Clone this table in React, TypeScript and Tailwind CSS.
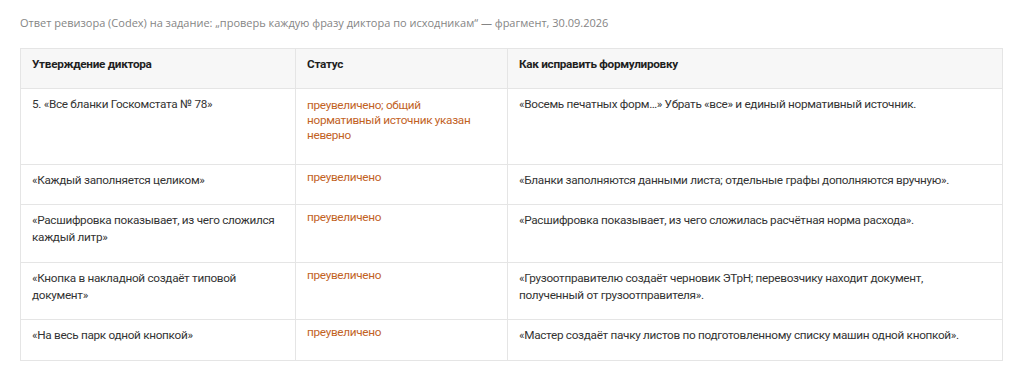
import React from 'react';

type Row = {
  claim: string;
  status: string;
  fix: string;
};

const rows: Row[] = [
  {
    claim: '5. «Все бланки Госкомстата № 78»',
    status: 'преувеличено; общий нормативный источник указан неверно',
    fix: '«Восемь печатных форм…» Убрать «все» и единый нормативный источник.',
  },
  {
    claim: '«Каждый заполняется целиком»',
    status: 'преувеличено',
    fix: '«Бланки заполняются данными листа; отдельные графы дополняются вручную».',
  },
  {
    claim: '«Расшифровка показывает, из чего сложился каждый литр»',
    status: 'преувеличено',
    fix: '«Расшифровка показывает, из чего сложилась расчётная норма расхода».',
  },
  {
    claim: '«Кнопка в накладной создаёт типовой документ»',
    status: 'преувеличено',
    fix: '«Грузоотправителю создаёт черновик ЭТрН; перевозчику находит документ, полученный от грузоотправителя».',
  },
  {
    claim: '«На весь парк одной кнопкой»',
    status: 'преувеличено',
    fix: '«Мастер создаёт пачку листов по подготовленному списку машин одной кнопкой».',
  },
];

export default function App() {
  return (
    <div className="min-h-[380px] bg-white pl-5 pr-[21px] pt-[14px] text-[#333]">
      <p className="font-['Open_Sans',sans-serif] text-[11px] leading-[17px] text-[#858585]">
        Ответ ревизора (Codex) на задание: „проверь каждую фразу диктора по исходникам“ — фрагмент, 30.09.2026
      </p>

      <table className="mt-[17px] w-full table-fixed border-collapse border border-[#e5e5e5] font-['Roboto',sans-serif] text-[11.75px] leading-[17px] tracking-[-0.3px]">
        <colgroup>
          <col className="w-[275px]" />
          <col className="w-[212px]" />
          <col />
        </colgroup>
        <thead>
          <tr className="bg-[#f7f7f7]">
            <th className="h-[40px] border border-[#e5e5e5] px-[11px] pt-[7px] pb-[15px] text-left align-top font-bold text-[#1f1f1f]">
              Утверждение диктора
            </th>
            <th className="border border-[#e5e5e5] px-[11px] pt-[7px] pb-[15px] text-left align-top font-bold text-[#1f1f1f]">
              Статус
            </th>
            <th className="border border-[#e5e5e5] pl-[11px] pr-4 pt-[7px] pb-[15px] text-left align-top font-bold text-[#1f1f1f]">
              Как исправить формулировку
            </th>
          </tr>
        </thead>
        <tbody>
          {rows.map((row, i) => (
            <tr key={i}>
              <td className="border border-[#e5e5e5] px-[11px] pt-[7px] pb-[15.5px] align-top">{row.claim}</td>
              <td
                className={`border border-[#e5e5e5] px-[11px] align-top leading-[15px] text-[#c2621f] ${
                  i === 0 ? 'pt-[9px] pb-[20.5px]' : 'pt-[5px] pb-[15.5px]'
                }`}
              >
                {row.status}
              </td>
              <td className="border border-[#e5e5e5] pl-[11px] pr-4 pt-[7px] pb-[15.5px] align-top">{row.fix}</td>
            </tr>
          ))}
        </tbody>
      </table>
    </div>
  );
}
